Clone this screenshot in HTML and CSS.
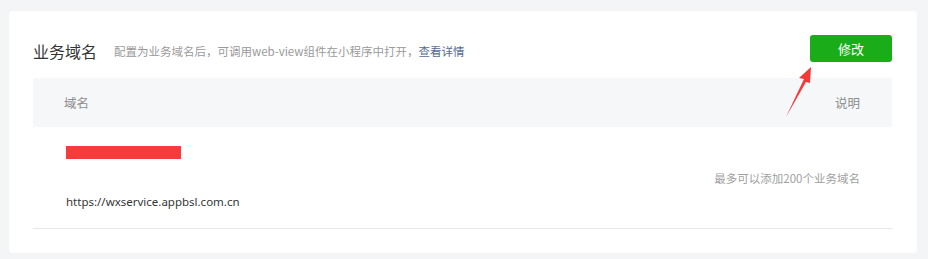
FILE: index.html
```html
<!DOCTYPE html>
<html lang="zh-CN">
<head>
<meta charset="utf-8">
<title>业务域名</title>
<link rel="stylesheet" href="styles.css">
</head>
<body>
<div class="card">
  <div class="head">
    <div class="head-text">
      <h2 class="title">业务域名</h2>
      <span class="desc">配置为业务域名后，可调用web-view组件在小程序中打开，<a class="link" href="#">查看详情</a></span>
    </div>
    <button class="btn">修改</button>
  </div>
  <div class="table">
    <div class="thead">
      <span class="th">域名</span>
      <span class="th">说明</span>
    </div>
    <div class="trow">
      <div class="cell-left">
        <div class="redact"></div>
        <div class="url">https://wxservice.appbsl.com.cn</div>
      </div>
      <div class="cell-right">最多可以添加200个业务域名</div>
    </div>
  </div>
  <svg class="arrow" width="40" height="60" viewBox="0 0 40 60">
    <polygon points="3,58 21,20 16,19 28,8 27,24 23,23" fill="#f53838"/>
  </svg>
</div>
</body>
</html>
```

FILE: styles.css
```css
* { box-sizing: border-box; }
html, body { margin: 0; }
body {
  background: #f4f5f7;
  padding: 11px 11px 6px 9px;
  font-family: "Noto Sans", "Noto Sans CJK SC", sans-serif;
  color: #353535;
}
.card {
  position: relative;
  background: #fff;
  border-radius: 4px;
  padding: 24px 25px 24px 24px;
  height: 242px;
}
.head {
  display: flex;
  align-items: center;
  justify-content: space-between;
  height: 27px;
  margin-bottom: 16px;
}
.head-text {
  display: flex;
  align-items: center;
}
.title {
  margin: 0 17px 0 0;
  font-family: "Noto Sans CJK SC", sans-serif;
  font-size: 16px;
  font-weight: 400;
  color: #353535;
  line-height: 24px;
  position: relative;
  top: 2px;
}
.desc {
  font-family: "Noto Sans CJK SC", sans-serif;
  font-size: 11.5px;
  color: #9a9a9a;
  line-height: 20px;
  position: relative;
  top: 2px;
}
.link {
  color: #576b95;
  text-decoration: none;
}
.btn {
  width: 82px;
  height: 27px;
  border: 0;
  border-radius: 3px;
  background: #1aad19;
  color: #fff;
  font-family: "Noto Sans CJK SC", sans-serif;
  font-size: 13px;
  padding: 0;
}
.thead {
  display: flex;
  justify-content: space-between;
  align-items: center;
  height: 49px;
  background: #f6f7f9;
  padding: 0 32px 0 31px;
}
.th {
  font-family: "Noto Sans CJK SC", sans-serif;
  font-size: 12.5px;
  color: #8d8d8d;
}
.trow {
  display: flex;
  justify-content: space-between;
  align-items: center;
  height: 102px;
  border-bottom: 1px solid #e7e7eb;
  padding: 0 32px 0 33px;
}
.cell-left {
  align-self: flex-start;
  padding-top: 19px;
}
.redact {
  width: 115px;
  height: 13px;
  background: #f83a3a;
}
.url {
  margin-top: 33px;
  font-size: 11.5px;
  line-height: 20px;
  color: #353535;
}
.cell-right {
  font-family: "Noto Sans CJK SC", sans-serif;
  font-size: 11.5px;
  color: #a0a0a0;
}
.arrow {
  position: absolute;
  left: 774px;
  top: 48px;
}
```
